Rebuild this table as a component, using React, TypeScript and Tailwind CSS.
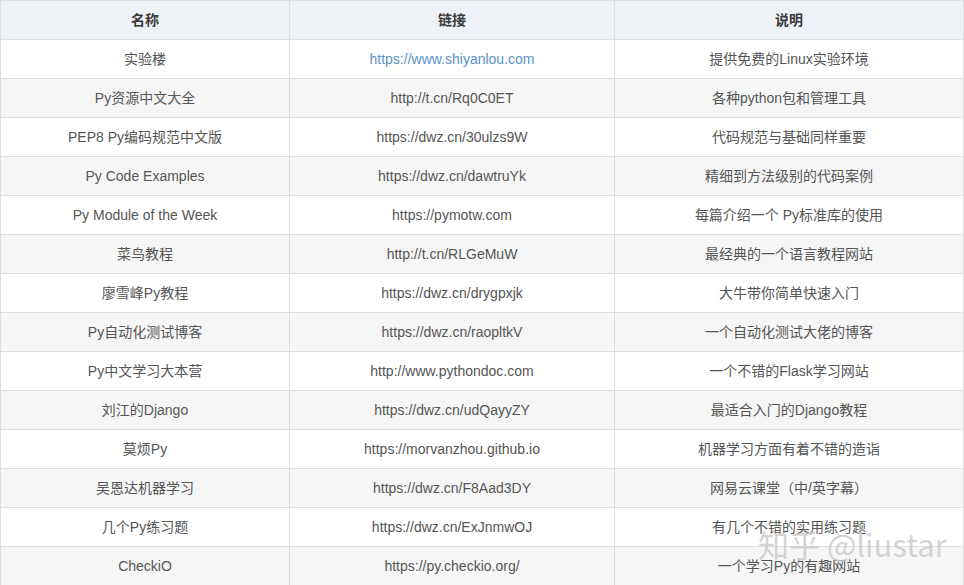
const rows: [string, string, string][] = [
  ["实验楼", "https://www.shiyanlou.com", "提供免费的Linux实验环境"],
  ["Py资源中文大全", "http://t.cn/Rq0C0ET", "各种python包和管理工具"],
  ["PEP8 Py编码规范中文版", "https://dwz.cn/30ulzs9W", "代码规范与基础同样重要"],
  ["Py Code Examples", "https://dwz.cn/dawtruYk", "精细到方法级别的代码案例"],
  ["Py Module of the Week", "https://pymotw.com", "每篇介绍一个 Py标准库的使用"],
  ["菜鸟教程", "http://t.cn/RLGeMuW", "最经典的一个语言教程网站"],
  ["廖雪峰Py教程", "https://dwz.cn/drygpxjk", "大牛带你简单快速入门"],
  ["Py自动化测试博客", "https://dwz.cn/raopltkV", "一个自动化测试大佬的博客"],
  ["Py中文学习大本营", "http://www.pythondoc.com", "一个不错的Flask学习网站"],
  ["刘江的Django", "https://dwz.cn/udQayyZY", "最适合入门的Django教程"],
  ["莫烦Py", "https://morvanzhou.github.io", "机器学习方面有着不错的造诣"],
  ["吴恩达机器学习", "https://dwz.cn/F8Aad3DY", "网易云课堂（中/英字幕）"],
  ["几个Py练习题", "https://dwz.cn/ExJnmwOJ", "有几个不错的实用练习题"],
  ["CheckiO", "https://py.checkio.org/", "一个学习Py的有趣网站"],
];

export default function App() {
  return (
    <div
      className="relative h-[585px] w-[964px] overflow-hidden bg-white"
      style={{ fontFamily: '"Liberation Sans", Arial, "Noto Sans CJK SC", sans-serif' }}
    >
      <table className="w-[963px] table-fixed border-collapse text-[14px]">
        <colgroup>
          <col className="w-[289px]" />
          <col className="w-[325px]" />
          <col className="w-[349px]" />
        </colgroup>
        <thead>
          <tr className="h-[39px] bg-[#eef1f5]">
            {["名称", "链接", "说明"].map((h) => (
              <th
                key={h}
                className="border border-[#dcdfe3] p-0 text-center font-bold text-[#3a3a3a]"
              >
                {h}
              </th>
            ))}
          </tr>
        </thead>
        <tbody>
          {rows.map((r, i) => (
            <tr key={r[0]} className={`h-[39px] ${i % 2 === 1 ? "bg-[#f6f6f6]" : "bg-white"}`}>
              <td className="border border-[#dedede] p-0 text-center text-[#555]">{r[0]}</td>
              <td
                className={`border border-[#dedede] p-0 text-center ${
                  i === 0 ? "text-[#5b93c6]" : "text-[#555]"
                }`}
              >
                {r[1]}
              </td>
              <td className="border border-[#dedede] p-0 text-center text-[#555]">{r[2]}</td>
            </tr>
          ))}
        </tbody>
      </table>

      {/* watermark */}
      <div
        className="pointer-events-none absolute left-[758px] top-[524px] whitespace-nowrap text-[31px] leading-[40px] text-[#c9c9c9]/80"
        style={{ fontFamily: '"Noto Sans CJK SC", "Liberation Sans", sans-serif' }}
      >
        知乎 @liustar
      </div>
    </div>
  );
}
